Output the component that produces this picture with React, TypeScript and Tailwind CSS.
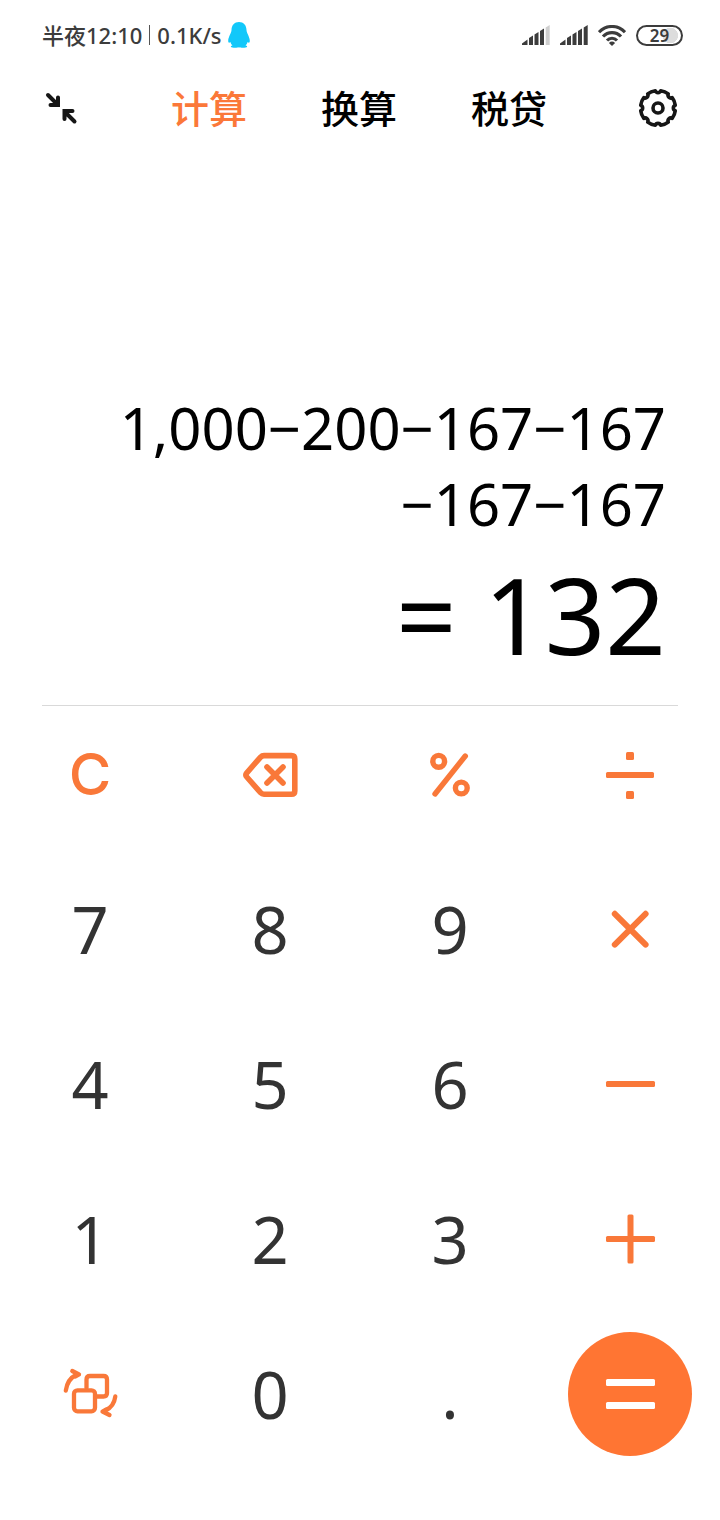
import React, { useState } from 'react'

type IconProps = { className?: string }

const CollapseIcon: React.FC<IconProps> = ({ className }) => (
  <svg viewBox="0 0 38 38" className={className} fill="none" stroke="currentColor" strokeWidth="4" strokeLinecap="round" strokeLinejoin="miter">
    <path d="M6 6L15 15M8.500 16H16V8.500" />
    <path d="M32.500 32.500L23 23M30.500 22H22.500V30" />
  </svg>
)

// eight lobes separated by small round notches
const gearPath = () => {
  const point = (radius: number, deg: number) => {
    const rad = (deg * Math.PI) / 180
    return `${(20 + radius * Math.cos(rad)).toFixed(2)} ${(20 + radius * Math.sin(rad)).toFixed(2)}`
  }
  let d = `M${point(17.5, 9)}`
  for (let i = 0; i < 8; i++) {
    const next = (i + 1) * 45
    d += `A15.5 15.5 0 0 1 ${point(17.5, next - 9)}`
    d += `A2.9 2.9 0 0 0 ${point(17.5, next + 9)}`
  }
  return d + 'Z'
}

const GearIcon: React.FC<IconProps> = ({ className }) => (
  <svg viewBox="0 0 40 40" className={className} fill="none" stroke="currentColor" strokeWidth="3.6" strokeLinejoin="round">
    <path d={gearPath()} />
    <circle cx="20" cy="20" r="5" />
  </svg>
)

const PenguinIcon: React.FC<IconProps> = ({ className }) => (
  <svg viewBox="0 0 22 26" className={className} fill="#12c8fa">
    <path d="M11 0C6.500 0 3.600 3.200 3.500 8C3.400 11 .2 15 .2 18.800C.2 20.800 1 21.400 2.400 20C2.800 21.500 3.500 22.500 4.500 23.300C3 23.800 2.700 24.500 3 25C3.500 26 9.500 26 11 25.300C12.500 26 18.500 26 19 25C19.300 24.500 19 23.800 17.500 23.300C18.500 22.500 19.200 21.500 19.600 20C21 21.400 21.800 20.800 21.800 18.800C21.800 15 18.600 11 18.500 8C18.400 3.200 15.500 0 11 0Z" />
  </svg>
)

const SignalIcon: React.FC<IconProps & { level: number }> = ({ className, level }) => (
  <svg viewBox="0 0 28 20" className={className} fill="currentColor">
    <path d="M0 20V18.500L5.500 14.500V20Z" />
    <path d="M7 20V13L11 10.500V20Z" />
    <path d="M12.500 20V9.500L16.500 7V20Z" />
    <path d="M18 20V6L22 3.500V20Z" />
    <path d="M23.700 20V2.500L27.700 0V20Z" opacity={level < 5 ? 0.25 : 1} />
  </svg>
)

const WifiIcon: React.FC<IconProps> = ({ className }) => (
  <svg viewBox="0 0 28 21" className={className} fill="none" stroke="currentColor" strokeWidth="3.2">
    <path d="M1 7.200C8.500-.4 19.500-.4 27 7.200" />
    <path d="M5 11.500C10 6.300 18 6.300 23 11.500" />
    <path d="M9 15.500C11.800 12.500 16.200 12.500 19 15.500" />
    <path d="M14 21L10.900 17.900Q14 15.300 17.100 17.900Z" fill="currentColor" stroke="none" />
  </svg>
)

const BackspaceIcon: React.FC = () => (
  <svg viewBox="0 0 60 60" className="size-[60px]" fill="none" stroke="currentColor" strokeWidth="5.600" strokeLinecap="round" strokeLinejoin="round">
    <path d="M24 11.600H51.500Q54.800 11.600 54.800 15V47Q54.800 50.200 51.500 50.200H24Q22 50.200 20.600 48.700L6.800 33Q5 31 6.800 28.800L20.600 13.100Q22 11.600 24 11.600Z" />
    <path d="M27 23L43 39M43 23L27 39" />
  </svg>
)

const PercentIcon: React.FC = () => (
  <svg viewBox="0 0 60 60" className="size-[60px]" fill="none" stroke="currentColor" strokeWidth="5.400" strokeLinecap="round">
    <circle cx="18.700" cy="17.300" r="5.900" />
    <circle cx="41.300" cy="44" r="5.900" />
    <path d="M45.300 12L15 50" />
  </svg>
)

const DivideIcon: React.FC = () => (
  <svg viewBox="0 0 60 60" className="size-[60px]" fill="currentColor">
    <rect x="26" y="8" width="8" height="8" rx="1.500" />
    <rect x="6" y="28" width="48" height="6" rx="1.500" />
    <rect x="26" y="47" width="8" height="8" rx="1.500" />
  </svg>
)

const MultiplyIcon: React.FC = () => (
  <svg viewBox="0 0 60 60" className="size-[60px]" fill="none" stroke="currentColor" strokeWidth="6" strokeLinecap="round">
    <path d="M14.800 14.800L45.600 45.600M45.600 14.800L14.800 45.600" />
  </svg>
)

const MinusIcon: React.FC = () => (
  <svg viewBox="0 0 60 60" className="size-[60px]" fill="currentColor">
    <rect x="6" y="27" width="49" height="6" rx="1.500" />
  </svg>
)

const PlusIcon: React.FC = () => (
  <svg viewBox="0 0 60 60" className="size-[60px]" fill="currentColor">
    <rect x="6" y="27" width="49" height="6" rx="1.500" />
    <rect x="27.500" y="5.500" width="6" height="49" rx="1.500" />
  </svg>
)

const EqualsIcon: React.FC = () => (
  <svg viewBox="0 0 60 60" className="size-[60px]" fill="currentColor">
    <rect x="6" y="15" width="49" height="7" rx="1.500" />
    <rect x="6" y="38" width="49" height="7" rx="1.500" />
  </svg>
)

const SwitchIcon: React.FC = () => (
  <svg viewBox="0 0 60 60" className="size-[60px]" fill="none" stroke="currentColor" strokeWidth="4.300" strokeLinecap="round" strokeLinejoin="round">
    <rect x="14" y="26.300" width="21" height="21" rx="3.500" />
    <path d="M26.500 24V15.500Q26.500 12 30 12H43.500Q47 12 47 15.500V29Q47 32.500 43.500 32.500H37" />
    <path d="M5.800 26.500Q7.500 15 16 11" />
    <path d="M12.300 7L19 10.500L15.500 12.500" />
    <path d="M55.300 32.500Q54 42.500 45.500 46.500" />
    <path d="M49.500 51L42.500 47.500L46 45.500" />
  </svg>
)

const tabs = ['计算', '换算', '税贷']

const expression = ['1,000−200−167−167', '−167−167']

type Key = {
  label: string
  content: React.ReactNode
  kind: 'digit' | 'action' | 'equals'
}

const digit = (value: string): Key => ({ label: value, content: value, kind: 'digit' })

const keys: Key[] = [
  { label: '清除', content: <span className="font-['Inter',sans-serif] text-[58px] font-medium">C</span>, kind: 'action' },
  { label: '退格', content: <BackspaceIcon />, kind: 'action' },
  { label: '百分号', content: <PercentIcon />, kind: 'action' },
  { label: '除', content: <DivideIcon />, kind: 'action' },
  digit('7'),
  digit('8'),
  digit('9'),
  { label: '乘', content: <MultiplyIcon />, kind: 'action' },
  digit('4'),
  digit('5'),
  digit('6'),
  { label: '减', content: <MinusIcon />, kind: 'action' },
  digit('1'),
  digit('2'),
  digit('3'),
  { label: '加', content: <PlusIcon />, kind: 'action' },
  { label: '切换', content: <SwitchIcon />, kind: 'action' },
  digit('0'),
  digit('.'),
  { label: '等于', content: <EqualsIcon />, kind: 'equals' },
]

const keyStyles = {
  digit: 'text-[65px] text-[#333333]',
  action: 'text-[#f97839]',
  equals: 'bg-[#ff7533] text-white',
}

const StatusBar: React.FC = () => (
  <div className="flex h-[70px] items-center justify-between pr-[37px] pl-[42px] text-[#3c3c3c]">
    <div className="flex items-center text-[22px] leading-none font-medium">
      <span>半夜12:10</span>
      <span className="mx-[7px] h-5 w-px bg-[#555555]" />
      <span>0.1K/s</span>
      <PenguinIcon className="ml-[6px] h-[26px] w-[22px]" />
    </div>
    <div className="flex items-center gap-[10px]">
      <SignalIcon level={4} className="h-5 w-7" />
      <SignalIcon level={5} className="h-5 w-7" />
      <WifiIcon className="h-[21px] w-7" />
      <span className="flex h-[21px] w-[47px] items-center justify-center rounded-full border-2 border-current bg-radial-[8px_8px_at_75%_50%] from-[#dddddd] from-95% to-white to-100% text-[17px] leading-none font-semibold">
        29
      </span>
    </div>
  </div>
)

const App: React.FC = () => {
  const [activeTab, setActiveTab] = useState('计算')

  return (
    <div className="min-h-screen bg-white font-['Noto_Sans','Noto_Sans_CJK_SC',sans-serif]">
      <StatusBar />

      <header className="flex h-[76px] items-center justify-between px-[42px] text-black">
        <button type="button" aria-label="缩小窗口">
          <CollapseIcon className="size-[38px] text-[#161616]" />
        </button>
        <nav className="flex gap-[74px]">
          {tabs.map(tab => (
            <button
              key={tab}
              type="button"
              onClick={() => setActiveTab(tab)}
              className={`text-[38px] leading-none font-medium ${
                activeTab === tab ? 'text-[#fb7839]' : 'text-black'
              }`}
            >
              {tab}
            </button>
          ))}
        </nav>
        <button type="button" aria-label="设置">
          <GearIcon className="size-10 text-[#161616]" />
        </button>
      </header>

      <main>
        {/* 算式与结果 */}
        <section className="mx-[42px] flex min-h-[560px] flex-col justify-end border-b border-[#d9d9d9] pr-3 pb-[19px] text-right text-black">
          {expression.map((line, i) => (
            <p key={i} className="text-[58px] leading-[76px]">{line}</p>
          ))}
          <p className="text-[106px] leading-[144px]">= 132</p>
        </section>

        {/* 键盘 */}
        <section className="grid grid-cols-4 justify-items-center gap-y-[31px] pt-[6px]">
          {keys.map(key => (
            <button
              key={key.label}
              type="button"
              aria-label={key.label}
              className={`flex size-[124px] items-center justify-center rounded-full leading-none ${keyStyles[key.kind]}`}
            >
              {key.content}
            </button>
          ))}
        </section>
      </main>
    </div>
  )
}

export default App
